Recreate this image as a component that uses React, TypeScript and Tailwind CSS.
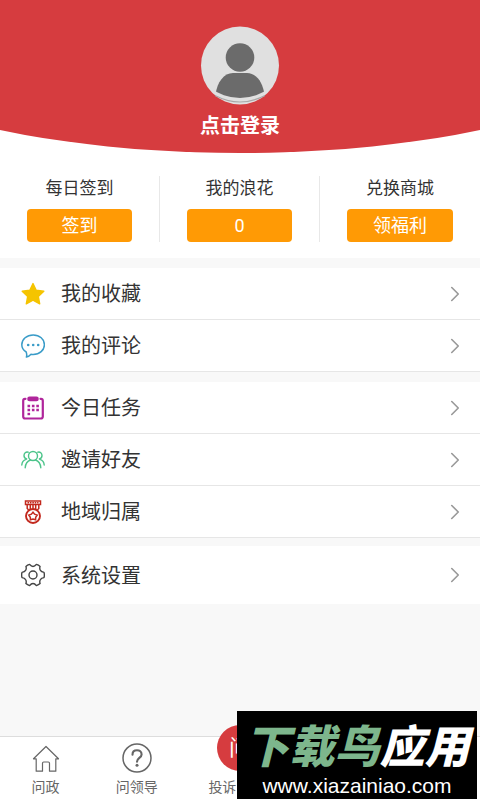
import React from "react";
import { ChevronRight } from "lucide-react";

interface StatProps {
  label: string;
  value: string;
}

interface MenuItem {
  label: string;
  icon: React.ReactNode;
}

const stats: StatProps[] = [
  { label: "每日签到", value: "签到" },
  { label: "我的浪花", value: "0" },
  { label: "兑换商城", value: "领福利" },
];

const StarIcon = () => (
  <svg viewBox="0 0 24 24" className="size-6" fill="#f5c400" stroke="#f5c400" strokeWidth="1.4" strokeLinejoin="round">
    <path d="M12 1.6l3.2 6.7 7.6 1-5.5 5.1 1.4 7.4L12 18.2l-6.7 3.6 1.4-7.4L1.2 9.3l7.6-1z" />
  </svg>
);

const CommentIcon = () => (
  <svg viewBox="0 0 24 24" className="size-6" fill="none" stroke="#3a9cc8" strokeWidth="1.5" strokeLinejoin="round">
    <path d="M5.200 18C2.300 16.300.8 13.800.8 10.800.8 5.100 5.800 1 12.200 1s11.200 4.100 11.200 9.700-4.800 9.700-11.200 9.700c-.8 0-1.500 0-2.200-.2-1.300 1.500-2.800 2.500-4.600 2.900.5-1.500.4-3.300-.2-5.100z" />
    <g fill="#3a9cc8" stroke="none">
      <circle cx="7.200" cy="11" r="1.300" />
      <circle cx="12.200" cy="11" r="1.300" />
      <circle cx="17.200" cy="11" r="1.300" />
    </g>
  </svg>
);

const TaskIcon = () => (
  <svg viewBox="0 0 24 24" className="size-6" fill="none" stroke="#b0259b" strokeWidth="2.200" strokeLinecap="round">
    <path d="M4.500 2.800H4Q2.200 2.800 2.200 4.800v15.700Q2.200 22.500 4.200 22.500h15.600Q21.800 22.500 21.800 20.500V4.800Q21.800 2.800 20 2.800h-.5" />
    <rect x="6.200" y=".6" width="11.600" height="4.600" rx="2.300" fill="#b0259b" stroke="none" />
    <g fill="#b0259b" stroke="none">
      <path d="M6.500 8.800h2.600v2.400H6.500zM10.900 8.800h2.600v2.400h-2.600zM15.300 8.800h2.600v2.400h-2.600z" />
      <path d="M6.500 12.800h2.600v2.400H6.500zM10.900 12.800h2.600v2.400h-2.600zM15.300 12.800h2.600v2.400h-2.600z" />
      <path d="M6.500 16.800h2.600v2.400H6.500z" />
    </g>
  </svg>
);

const FriendsIcon = () => (
  <svg viewBox="0 0 24 24" className="size-6" fill="none" stroke="#4cc48a" strokeWidth="1.400" strokeLinecap="round">
    <circle cx="12" cy="8" r="4.500" />
    <path d="M4.200 19.700c.3-4 2.200-6.600 5.300-7.700M19.800 19.700c-.3-4-2.200-6.600-5.300-7.700" />
    <path d="M7.200 4.200C4.800 3.600 3 5.200 3 7.400c0 1.700.9 3 2.600 3.600M5 11.400C2.500 12.300 1 14.300.8 17" />
    <path d="M16.800 4.200c2.400-.6 4.200 1 4.200 3.200 0 1.700-.9 3-2.600 3.600M19 11.400c2.500.9 4 2.900 4.200 5.600" />
  </svg>
);

const MedalIcon = () => (
  <svg viewBox="0 0 24 24" className="size-6" fill="none" stroke="#c2281d" strokeWidth="1.500">
    <path d="M4.500 1h15v3.600h-15z" />
    <path d="M6.500 2.800h11" strokeDasharray="1.600 .8" />
    <path d="M6.200 5v3.500l1.500 1.500M17.800 5v3.500L16.300 10M9.300 5v4M12 5v3.500M14.700 5v4" />
    <circle cx="12" cy="16" r="7" strokeWidth="1.900" />
    <path d="M12 12.200l1.600 2 2.600.9-1.500 2.200-.1 2.500-2.600-.8-2.600.8-.1-2.500-1.500-2.200 2.600-.9z" strokeWidth="1.500" />
  </svg>
);

const GearIcon = () => (
  <svg viewBox="0 0 24 24" className="size-6" fill="none" stroke="#444" strokeWidth="1.400" strokeLinejoin="round">
    <path d="M8.600 1.400C9.700 2.800 10.800 3.500 12 3.500s2.300-.7 3.400-2.100c1.400.4 2.700 1.100 3.700 2-.6 1.800-.4 3 .3 4 .6 1 1.800 1.700 3.600 2 .5 1.700.5 3.500 0 5.200-1.800.3-3 1-3.600 2-.7 1-.9 2.200-.3 4-1 .9-2.300 1.600-3.700 2-1.100-1.400-2.200-2.100-3.400-2.100s-2.300.7-3.400 2.100c-1.400-.4-2.700-1.100-3.700-2 .6-1.800.4-3-.3-4-.6-1-1.800-1.700-3.600-2-.5-1.700-.5-3.500 0-5.200 1.800-.3 3-1 3.600-2 .7-1 .9-2.200.3-4 1-.9 2.300-1.600 3.700-2z" />
    <circle cx="12" cy="12" r="4" />
  </svg>
);

const HomeIcon = () => (
  <svg viewBox="0 0 28 28" className="size-7" fill="none" stroke="#666" strokeWidth="1.200" strokeLinejoin="round" strokeLinecap="round">
    <path d="M1.500 13.800L14 1.500l12.500 12.300h-2.700v12.400h-6.300v-8q0-1.200-1.200-1.200h-4.600q-1.200 0-1.200 1.200v8H4.200V13.800z" />
  </svg>
);

const QuestionIcon = () => (
  <svg viewBox="0 0 30 30" className="size-[30px]" fill="none" stroke="#666" strokeWidth="1.500" strokeLinecap="round">
    <circle cx="15" cy="15" r="14" />
    <path d="M10.500 11.700c0-2.800 1.900-4.400 4.500-4.400s4.600 1.600 4.600 4.100c0 3.400-4.600 3.700-4.600 7.300" strokeWidth="2.100" />
    <circle cx="15" cy="22.300" r="1.500" fill="#666" stroke="none" />
  </svg>
);

const groups: MenuItem[][] = [
  [
    { label: "我的收藏", icon: <StarIcon /> },
    { label: "我的评论", icon: <CommentIcon /> },
  ],
  [
    { label: "今日任务", icon: <TaskIcon /> },
    { label: "邀请好友", icon: <FriendsIcon /> },
    { label: "地域归属", icon: <MedalIcon /> },
  ],
];

const Avatar = () => (
  <svg viewBox="0 0 80 80" className="size-20">
    <defs>
      <clipPath id="avatar-inner">
        <ellipse cx="40" cy="36" rx="42" ry="36" />
      </clipPath>
    </defs>
    <circle cx="40" cy="39.500" r="39" fill="#e0e0e0" />
    <path d="M15 69.500q25 13 50 0" fill="none" stroke="#a8a8a8" strokeWidth="1.200" />
    <g fill="#6b6b6b">
      <circle cx="40" cy="31.500" r="14.300" />
      <path clipPath="url(#avatar-inner)" d="M15.500 80V69C17 56 24 47 33 47h14c9 0 16 9 17.500 22v11z" />
    </g>
  </svg>
);

const Stat = ({ label, value }: StatProps) => (
  <div className="flex flex-col items-center px-[27px]">
    <span className="text-[17px] leading-6 whitespace-nowrap">{label}</span>
    <button type="button" className="mt-[9px] h-[33px] w-full rounded bg-[#ff9a05] text-lg leading-6 text-white">
      {value}
    </button>
  </div>
);

const MenuRow = ({ label, icon }: MenuItem) => (
  <button
    type="button"
    className="flex h-[52px] w-full items-center border-b border-[#e6e6e6] pr-3 pl-[21px] text-left"
  >
    {icon}
    <span className="ml-4 flex-1 pt-px text-xl">{label}</span>
    <ChevronRight className="size-[26px] text-[#999]" strokeWidth={1.5} />
  </button>
);

const App: React.FC = () => {
  return (
    <div className="relative flex min-h-screen flex-col bg-[#f8f8f8] font-[Roboto,'Noto_Sans_CJK_SC',sans-serif] text-[#333]">
      {/* Header */}
      <header className="bg-white">
        <div className="flex h-[153px] flex-col items-center bg-[#d63c3f] pt-[26px] [clip-path:ellipse(95%_100%_at_50%_0)]">
          <Avatar />
          <button type="button" className="mt-[6px] text-xl font-bold text-white">
            点击登录
          </button>
        </div>
        <div className="grid grid-cols-3 divide-x divide-[#e8e8e8] pt-[23px] pb-4">
          {stats.map((s) => (
            <Stat key={s.label} label={s.label} value={s.value} />
          ))}
        </div>
      </header>

      {/* Menu */}
      <main className="flex-1 pb-16">
        {groups.map((group, i) => (
          <section key={i} className="mt-[10px] bg-white">
            {group.map((item) => (
              <MenuRow key={item.label} label={item.label} icon={item.icon} />
            ))}
          </section>
        ))}
        <section className="mt-2 bg-white py-[3px] [&>button]:border-b-0">
          <MenuRow label="系统设置" icon={<GearIcon />} />
        </section>
      </main>

      {/* Bottom bar */}
      <nav className="fixed inset-x-0 bottom-0 flex h-16 border-t border-[#ddd] bg-white text-sm leading-5 text-[#666]">
        <a href="#wenzheng" className="flex w-[19%] flex-col items-center pt-2">
          <HomeIcon />
          <span className="mt-1">问政</span>
        </a>
        <a href="#leader" className="flex w-[19%] flex-col items-center pt-[6px]">
          <QuestionIcon />
          <span className="mt-1">问领导</span>
        </a>
        <a href="#complaint" className="relative flex w-[24%] flex-col pt-10 pl-[26px]">
          <span className="absolute -top-3 left-1/2 flex size-[46px] -translate-x-1/2 items-center justify-center rounded-full bg-[#d63c3f] text-[22px] text-white">
            问
          </span>
          <span>投诉</span>
        </a>
      </nav>

      {/* Site mark */}
      <div className="fixed right-[3px] bottom-px flex h-[88px] w-60 flex-col items-center bg-black whitespace-nowrap text-white">
        <div className="mt-[10px] text-[45px] leading-[54px] font-black italic">
          <span className="text-[#7db68c]">下载鸟</span>应用
        </div>
        <div className="font-['Liberation_Sans',sans-serif] text-[21px] leading-[22px]">www.xiazainiao.com</div>
      </div>
    </div>
  );
};

export default App;
